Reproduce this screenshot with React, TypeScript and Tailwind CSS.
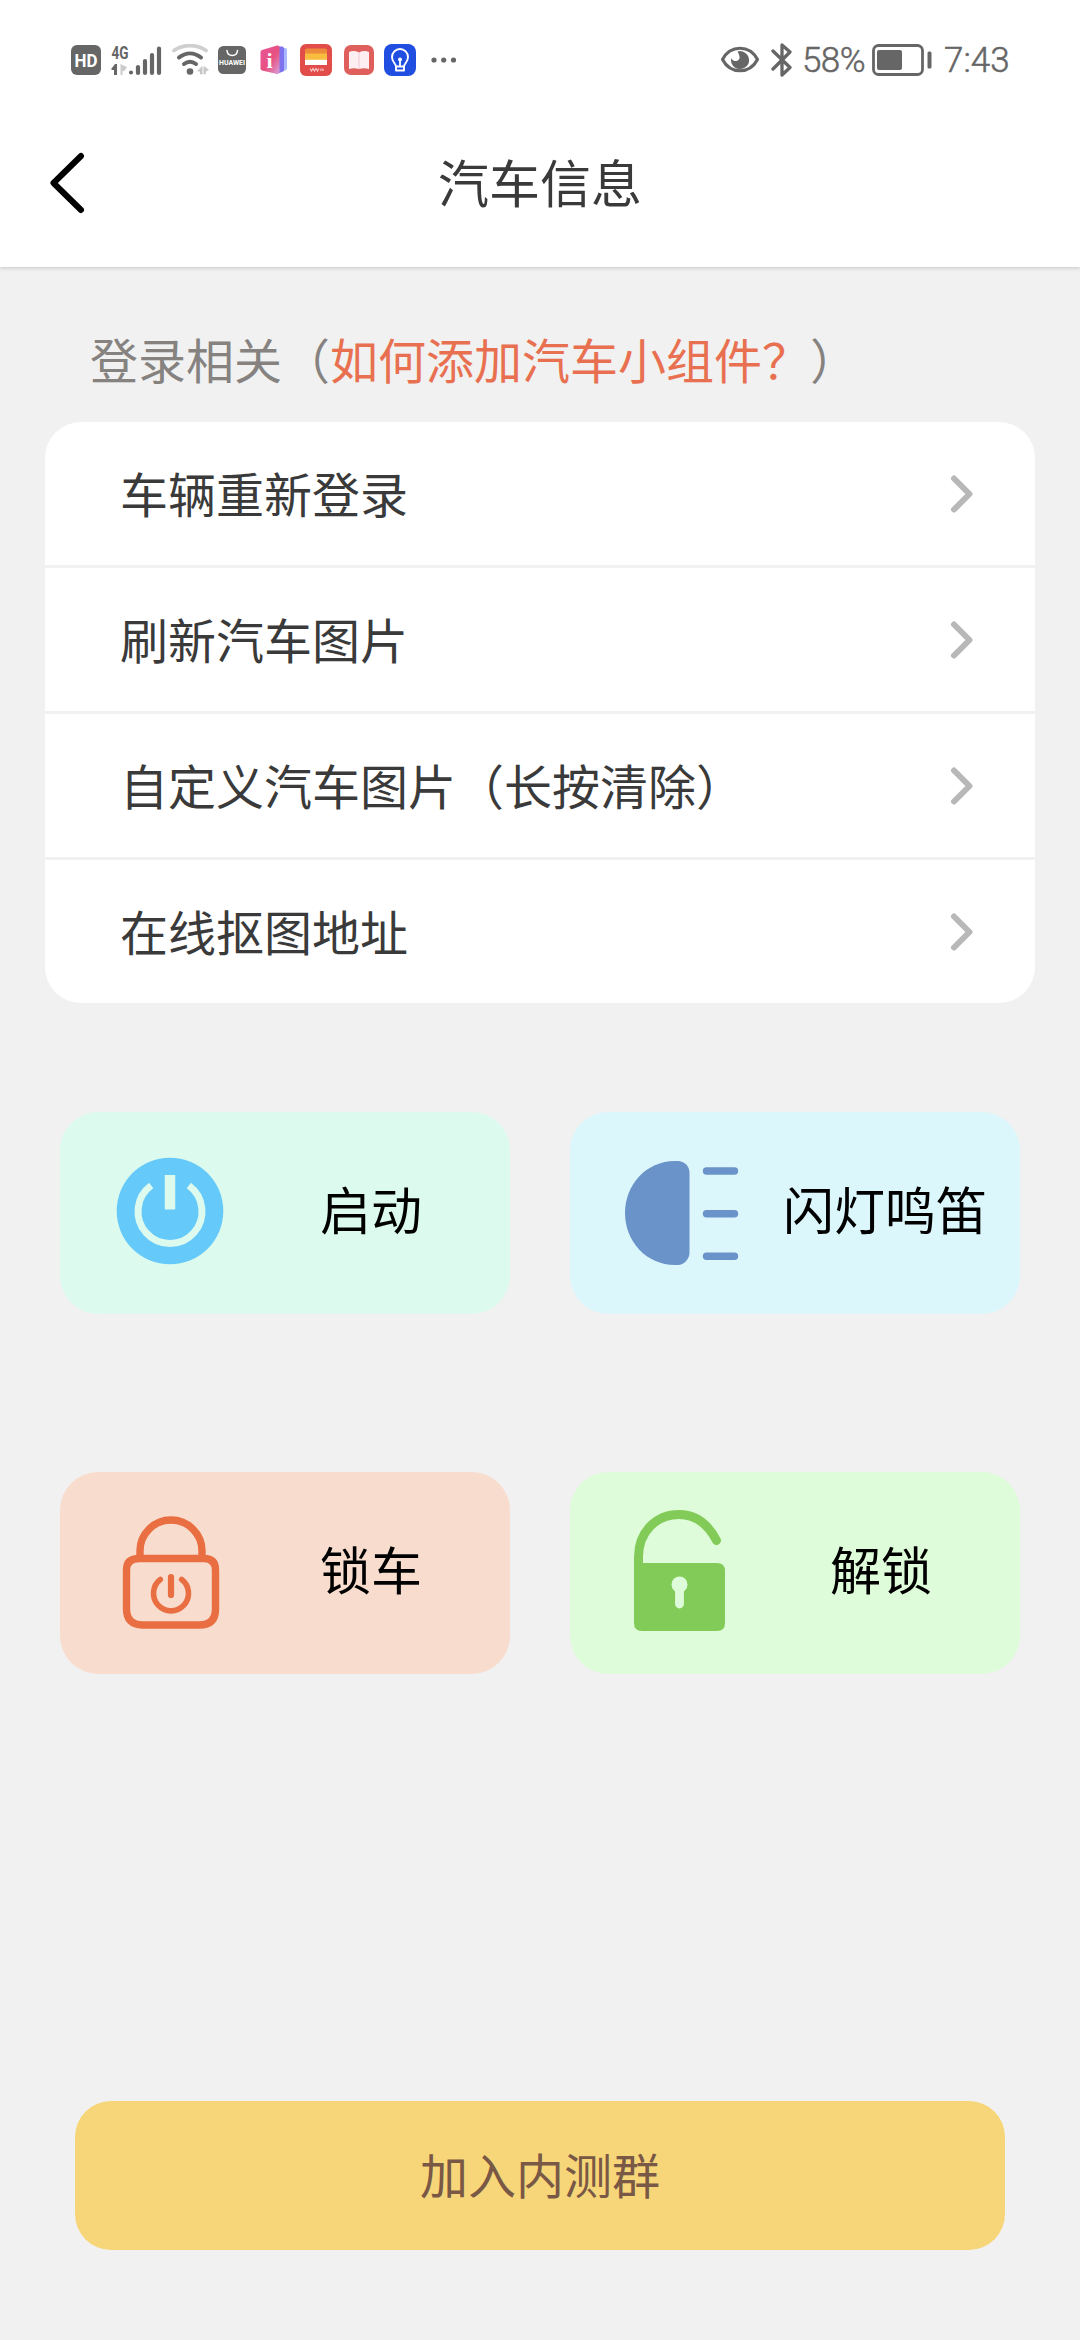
import type { ReactNode } from 'react';

const gray = '#666666';

function StatusBar() {
  return (
    <div className="flex h-[120px] items-center pl-[71px] pr-[72px] text-[#666666]">
      <svg width="30" height="30" viewBox="0 0 30 30">
        <rect width="30" height="30" rx="6" fill={gray} />
        <text x="15" y="22" textAnchor="middle" fontSize="19" fontWeight="700" textLength="23" lengthAdjust="spacingAndGlyphs" fill="#fff">HD</text>
      </svg>
      <svg className="-my-[6px] ml-[10px]" width="52" height="44" viewBox="0 -6 52 44">
        <text x="0.5" y="14.5" fontSize="18.5" fontWeight="700" textLength="17" lengthAdjust="spacingAndGlyphs" fill={gray}>4G</text>
        <path d="M6 31V20h-2L0.5 24.5V26H3v5Z" fill={gray} />
        <path d="M9.500 20v11h2V27h2l2.500-4Z" fill="#cccccc" />
        <g stroke={gray} strokeWidth="4.200" strokeLinecap="round">
          <path d="M20 28.500v.01M27 23v6M34 17v12M41 11v18M48 4.500V29" />
        </g>
      </svg>
      <svg className="ml-[8px]" width="38" height="32" viewBox="0 0 38 32" fill="none" strokeLinecap="round">
        <path d="M3 6.500C12 0 26 0 35 6.500" stroke="#cfcfcf" strokeWidth="3.800" />
        <path d="M8 13.500C15 8 23 8 30 13.500M13 20C17 17 21 17 25 20" stroke={gray} strokeWidth="4" />
        <circle cx="19" cy="27.500" r="3.300" fill={gray} />
        <path d="M31 23v7h-1.500v-3H27ZM33 23v7h1.200v-2.500L37 26Z" fill="#c6c6c6" stroke="#c6c6c6" />
      </svg>
      <svg className="ml-[9px]" width="28" height="28" viewBox="0 0 28 28">
        <rect width="28" height="28" rx="5.500" fill={gray} />
        <path d="M9 4.500c.5 6.500 10 6.500 10.500 0" fill="none" stroke="#fff" strokeWidth="1.500" strokeLinecap="round" />
        <text x="14" y="19" textAnchor="middle" fontSize="7" fontWeight="700" textLength="26" lengthAdjust="spacingAndGlyphs" fill="#fff">HUAWEI</text>
      </svg>
      <svg className="ml-[14px]" width="28" height="30" viewBox="0 0 28 30">
        <defs>
          <linearGradient id="book" x1="0" y1="0" x2="1" y2="1">
            <stop offset="0" stopColor="#e6569a" />
            <stop offset="0.55" stopColor="#e8517f" />
            <stop offset="1" stopColor="#d7a0dc" />
          </linearGradient>
        </defs>
        <path d="M19 3h6q2 0 2 2v18q0 2-2 2.500l-6 2Z" fill="#a9b8ff" />
        <path d="M16 1.500h6q2 0 2 2v21q0 2-2 2.500l-6 2Z" fill="#7f72ee" />
        <path d="M2 5 17 .6q2.500-.6 2.500 2V27q0 2.500-2.500 2L2 25.500Q.5 25 .5 23.500V7Q.5 5.500 2 5Z" fill="url(#book)" />
        <text x="9.500" y="23" textAnchor="middle" fontSize="22" fontWeight="700" fontFamily="Liberation Serif" fill="#fff">i</text>
      </svg>
      <svg className="ml-[12px]" width="32" height="32" viewBox="0 0 32 32">
        <rect width="32" height="32" rx="6" fill="#e24c4b" />
        <path d="M5 6q0-1.500 1.500-1.500h19Q27 4.500 27 6v4H5Z" fill="#ee8a3c" />
        <path d="M5 9.500h22v7H5Z" fill="#f8bd3f" />
        <path d="M5 15.800h22V21H5Z" fill="#fff" />
        <path d="m10 24.500 1.500 2.500L13 24.500l1.500 2.500L16 24.500l1.500 2.500L19 24.500m2 0V27m2-2.500V27" fill="none" stroke="#f6c3c2" strokeWidth="1.200" />
      </svg>
      <svg className="ml-[12px]" width="30" height="30" viewBox="0 0 30 30">
        <rect width="30" height="30" rx="7" fill="#df5f5c" />
        <path d="M5 7q5-2 10 .5Q20 5 25 7v17q-5-1.500-10 0-5-1.500-10 0Z" fill="#fdeef2" />
        <path d="M15 7.500V24" stroke="#f4cfd8" strokeWidth="1.200" />
      </svg>
      <svg className="ml-[10px]" width="32" height="32" viewBox="0 0 32 32">
        <rect width="32" height="32" rx="8" fill="#204ee0" />
        <path d="M12 22.500c0-3-4-4-4-9.500a8 8 0 0 1 16 0c0 5.500-4 6.500-4 9.500Zm0 0v4h8v-4" fill="none" stroke="#fff" strokeWidth="1.900" strokeLinejoin="round" />
        <path d="M16 16v6" stroke="#fff" strokeWidth="1.800" />
        <circle cx="16" cy="15.500" r="2" fill="#fff" />
      </svg>
      <svg className="ml-[15px]" width="26" height="8" viewBox="0 0 26 8" fill={gray}>
        <circle cx="3" cy="4" r="2.600" /><circle cx="12.700" cy="4" r="2.600" /><circle cx="22.500" cy="4" r="2.600" />
      </svg>

      <svg className="ml-auto" width="38" height="28" viewBox="0 0 38 28">
        <path d="M1.500 13.500C9.500-1.500 28.500-1.500 36.500 13.500 28.500 28.500 9.500 28.500 1.500 13.500Z" fill="none" stroke={gray} strokeWidth="3.200" strokeLinejoin="round" />
        <path d="M16.500 5.500A9 9 0 1 1 10.300 12c2 5 9 3.500 8.200-1.500-.3-2-1-3-2-5Z" fill={gray} />
      </svg>
      <svg className="ml-[12px]" width="21" height="34" viewBox="0 0 21 34" fill="none" stroke={gray} strokeWidth="3.300" strokeLinejoin="round" strokeLinecap="round">
        <path d="m2 8 17 16.500L11 32V2L19 9 2 26" />
      </svg>
      <span className="ml-[10px] mt-[2px] w-[64px] text-[35px] leading-[40px] tracking-[-0.6px] font-light [-webkit-text-stroke:0.5px_#666]">58%</span>
      <svg className="ml-[6px]" width="60" height="32" viewBox="0 0 60 32">
        <rect x="1.500" y="1.500" width="49" height="29" rx="5" fill="none" stroke={gray} strokeWidth="2.800" />
        <rect x="5" y="6" width="25" height="20" rx="2" fill={gray} />
        <rect x="55.500" y="7.500" width="4" height="17" rx="1.500" fill={gray} />
      </svg>
      <span className="ml-[12px] mt-[2px] w-[64px] text-[35px] leading-[40px] font-light [-webkit-text-stroke:0.5px_#666]">7:43</span>
    </div>
  );
}

function Header() {
  return (
    <header className="relative z-10 h-[267px] bg-white shadow-[0_1px_4px_rgba(0,0,0,0.18)]">
      <StatusBar />
      <div className="grid h-[126px] grid-cols-[120px_1fr_120px] items-center">
        <svg className="ml-[49px]" width="36" height="62" viewBox="0 0 36 62" fill="none" stroke="#000" strokeWidth="6" strokeLinecap="round" strokeLinejoin="round">
          <path d="M32 4 4.500 31 32 58" />
        </svg>
        <h1 className="pt-[6px] text-center text-[51px] leading-[60px] text-[#3a3a3a]">汽车信息</h1>
      </div>
    </header>
  );
}

const rows = ['车辆重新登录', '刷新汽车图片', '自定义汽车图片（长按清除）', '在线抠图地址'];

function SettingsList() {
  return (
    <ul className="mx-[45px] flex flex-col gap-[3px] overflow-hidden rounded-[36px]">
      {rows.map((label) => (
        <li key={label} className="flex h-[143px] items-center justify-between bg-white pl-[75px] pr-[61px]">
          <span className="pt-[6px] text-[48px] leading-[60px] text-[#3a3a3a]">{label}</span>
          <svg width="24" height="38" viewBox="0 0 24 38" fill="none" stroke="#b8b8b8" strokeWidth="6" strokeLinecap="round" strokeLinejoin="round">
            <path d="m4 3.500 15.500 15.500L4 34.500" />
          </svg>
        </li>
      ))}
    </ul>
  );
}

function PowerIcon() {
  return (
    <svg width="110" height="110" viewBox="0 0 110 110">
      <circle cx="55" cy="55" r="53.300" fill="#65c9fa" />
      <g fill="none" stroke="#ddfaee">
        <path d="M36.200 29.500A32 32 0 1 0 73.800 29.500" strokeWidth="7" />
        <path d="M55 19v34.500" strokeWidth="10.500" />
      </g>
    </svg>
  );
}

function LampIcon() {
  return (
    <svg width="116" height="110" viewBox="0 0 116 110">
      <path d="M51 3h3c6 0 11.500 5 11.500 11.500v80c0 6.500-5.500 12.500-11.500 12.500h-3C22 107 1 83 1 55S22 3 51 3Z" fill="#6a93c9" />
      <path d="M82.500 13h28M82.500 55.700h28M82.500 98.300h28" stroke="#6a93c9" strokeWidth="7.400" strokeLinecap="round" />
    </svg>
  );
}

function LockIcon() {
  return (
    <svg width="100" height="116" viewBox="0 0 100 116" fill="none" stroke="#e96e42" strokeWidth="7.400" strokeLinecap="round">
      <path d="M18 42V36a31 31 0 0 1 62 0v6" />
      <path d="M17 43.500H82Q93.500 43.500 93.500 55V94Q93.500 110 77.500 110H20.500Q4.500 110 4.500 94V55Q4.500 43.500 17 43.500Z" />
      <g strokeWidth="5.600">
        <path d="M38.300 64.500A17.500 17.500 0 1 0 59.700 64.500" />
        <path d="M49 62v18" strokeWidth="6.200" />
      </g>
    </svg>
  );
}

function UnlockIcon() {
  return (
    <svg width="94" height="124" viewBox="0 0 94 124">
      <path d="M6.500 62V48C6.500 23 24 5.500 47 5.500 63 5.500 76 15 84.500 31.500" fill="none" stroke="#82cb58" strokeWidth="9" strokeLinecap="round" />
      <path d="M2 54H85q8 0 8 8v52q0 8-8 8H10q-8 0-8-8Z" fill="#82cb58" />
      <circle cx="47.500" cy="75.500" r="8" fill="#dffcda" />
      <path d="M47.500 78v17" stroke="#dffcda" strokeWidth="8.800" strokeLinecap="round" />
    </svg>
  );
}

function Action({ icon, label, tone, inset }: { icon: ReactNode; label: string; tone: string; inset: string }) {
  return (
    <button className={`flex h-[202px] w-[450px] items-center rounded-[38px] ${tone}`}>
      <span className={`flex w-[213px] shrink-0 items-center ${inset}`}>{icon}</span>
      <span className="min-w-[196px] whitespace-nowrap text-center text-[51px] leading-[60px] text-black">{label}</span>
    </button>
  );
}

export default function App() {
  return (
    <div className="flex h-[2340px] w-[1080px] flex-col bg-[#f1f1f1] font-[Roboto,'Noto_Sans_CJK_SC',sans-serif]">
      <Header />
      <p className="mb-[29px] ml-[90px] mt-[66px] text-[48px] leading-[60px] text-[#858280]">
        登录相关（<span className="text-[#e87050]">如何添加汽车小组件？</span>）
      </p>
      <SettingsList />
      <div className="mx-[60px] mt-[109px] grid grid-cols-[450px_450px] justify-between gap-y-[158px]">
        <Action icon={<PowerIcon />} label="启动" tone="bg-[#ddfaee]" inset="pl-[55px] pb-[4px]" />
        <Action icon={<LampIcon />} label="闪灯鸣笛" tone="bg-[#dcf7fc]" inset="pl-[54px]" />
        <Action icon={<LockIcon />} label="锁车" tone="bg-[#f8ddcf]" inset="pl-[62px]" />
        <Action icon={<UnlockIcon />} label="解锁" tone="bg-[#dffcda]" inset="pl-[62px] pb-[4px]" />
      </div>
      <button className="mx-[75px] mb-[90px] mt-auto h-[149px] rounded-[36px] bg-[#f7d679] pt-[5px] text-[48px] leading-[60px] text-[#795845]">
        加入内测群
      </button>
    </div>
  );
}
